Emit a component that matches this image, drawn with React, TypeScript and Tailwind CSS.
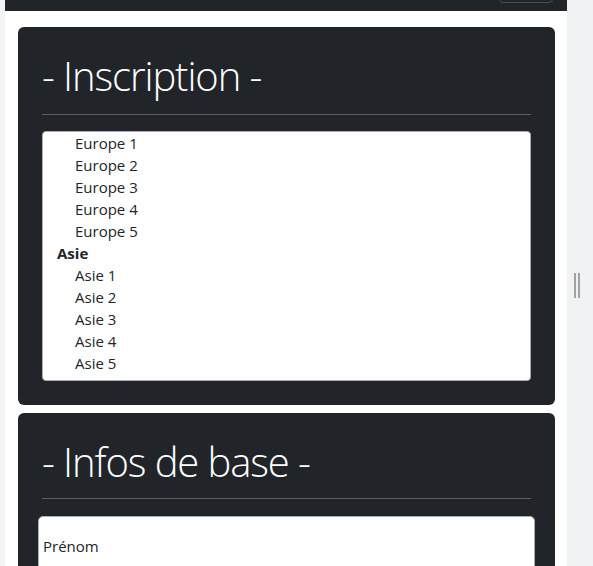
import React from "react";

const europe = ["Europe 1", "Europe 2", "Europe 3", "Europe 4", "Europe 5"];
const asie = ["Asie 1", "Asie 2", "Asie 3", "Asie 4", "Asie 5"];

function Card({ title, hrClass, children }: { title: string; hrClass: string; children: React.ReactNode }) {
  return (
    <section className="shrink-0 rounded-[6px] bg-[#212529] px-6 pt-[25px] pb-[24px]">
      <h1 className="text-[40px] font-light leading-[48px] text-white tracking-[-1.1px]">{title}</h1>
      <hr className={"border-0 border-t border-[#5c5f64] " + hrClass} />
      {children}
    </section>
  );
}

export default function App() {
  return (
    <div className="flex h-[566px] overflow-hidden bg-[#f1f2f4] font-['Open_Sans',sans-serif] text-[#212529]">
      <div className="w-[5px] shrink-0 bg-[#f3f4f6]" />
      <main className="flex w-[562px] shrink-0 flex-col bg-white">
        {/* navbar, scrolled almost out of view */}
        <div className="flex h-[11px] shrink-0 items-end justify-end overflow-hidden bg-[#212529] pr-[14px]">
          <div className="mb-[8px] h-[30px] w-[54px] shrink-0 rounded-[4px] border border-[#4a4e53]" />
        </div>

        <div className="flex shrink-0 flex-col gap-[8px] pl-[13px] pr-[12px] pt-[16px]">
          <Card title="- Inscription -" hrClass="mt-[14px]">
            <div className="mt-[16px] h-[250px] overflow-hidden rounded-[4px] border border-[#a9acb0] bg-white text-[15px]">
              {europe.map((o) => (
                <div key={o} className="h-[22px] pl-[32px] leading-[22px]">{o}</div>
              ))}
              <div className="h-[22px] pl-[14px] font-bold leading-[22px]">Asie</div>
              {asie.map((o) => (
                <div key={o} className="h-[22px] pl-[32px] leading-[22px]">{o}</div>
              ))}
            </div>
          </Card>

          <Card title="- Infos de base -" hrClass="mt-[12px]">
            <div className="-mx-[4px] mt-[17px] h-[80px] rounded-[5px] border border-[#a9acb0] bg-white pt-[18px] pl-[4px] text-[15px]">
              Prénom
            </div>
          </Card>
        </div>
      </main>
      <aside className="relative flex-1 bg-[#f1f2f4]">
        <div className="absolute left-[7px] top-[273px] flex h-[25px] gap-[2px]">
          <div className="w-[2px] bg-[#a3a3a3]" />
          <div className="w-[2px] bg-[#a3a3a3]" />
        </div>
      </aside>
    </div>
  );
}
